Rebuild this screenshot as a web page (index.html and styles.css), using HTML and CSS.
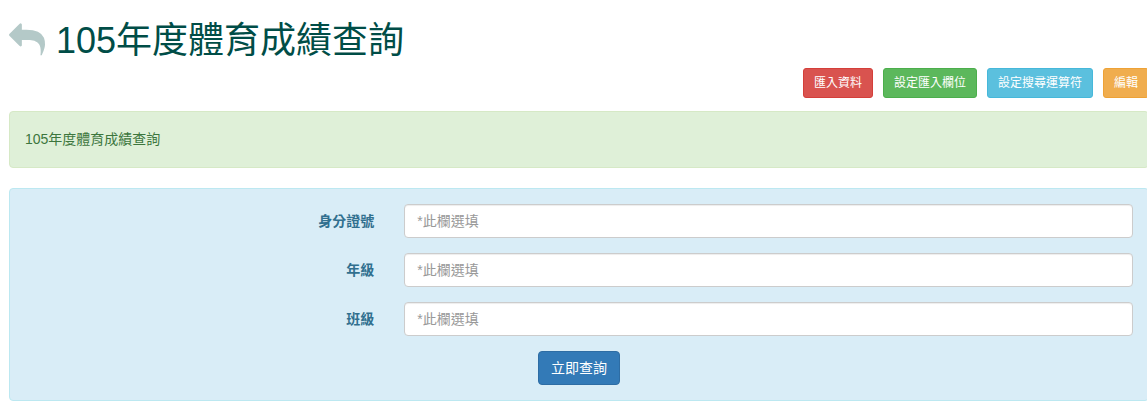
FILE: index.html
```html
<!DOCTYPE html>
<html lang="zh-Hant">
<head>
    <meta charset="UTF-8">
    <meta name="viewport" content="width=device-width, initial-scale=1.0">
    <title>105年度體育成績查詢</title>
    <link rel="stylesheet" href="styles.css">
</head>
<body>
    <div class="page">
        <div class="title-row">
            <a href="#" class="back">
                <svg viewBox="0 0 1792 1792" width="36" height="36" aria-hidden="true">
                    <path d="M1792 1120q0 166-127 451-3 7-10.5 24t-13.5 30-13 22q-12 17-28 17-15 0-23.5-10t-8.5-25q0-9 2.5-26.5t2.5-23.5q5-68 5-123 0-101-17.5-181t-48.5-138.5-80-101-105.5-69.5-133-42.5-154-21.5-175.5-6h-224v256q0 26-19 45t-45 19-45-19l-512-512q-19-19-19-45t19-45l512-512q19-19 45-19t45 19 19 45v256h224q713 0 875 403 53 134 53 333z"/>
                </svg>
            </a>
            <h1>105年度體育成績查詢</h1>
        </div>

        <div class="toolbar">
            <a href="#" class="btn btn-sm btn-danger">匯入資料</a>
            <a href="#" class="btn btn-sm btn-success">設定匯入欄位</a>
            <a href="#" class="btn btn-sm btn-info">設定搜尋運算符</a>
            <a href="#" class="btn btn-sm btn-warning">編輯</a>
        </div>

        <div class="alert-success">105年度體育成績查詢</div>

        <form class="search-form">
            <div class="form-row">
                <label for="idno">身分證號</label>
                <div class="field"><input type="text" id="idno" placeholder="*此欄選填"></div>
            </div>
            <div class="form-row">
                <label for="grade">年級</label>
                <div class="field"><input type="text" id="grade" placeholder="*此欄選填"></div>
            </div>
            <div class="form-row">
                <label for="klass">班級</label>
                <div class="field"><input type="text" id="klass" placeholder="*此欄選填"></div>
            </div>
            <div class="form-actions">
                <button type="button" class="btn btn-primary">立即查詢</button>
            </div>
        </form>
    </div>
</body>
</html>
```

FILE: styles.css
```css
* {
    box-sizing: border-box;
}
html, body {
    overflow: hidden;
}
body {
    margin: 0;
    background-color: #fff;
    color: #333;
    font-family: "Liberation Sans", "Noto Sans CJK TC", sans-serif;
    font-size: 14px;
    line-height: 20px;
}
.page {
    width: 1140px;
    margin-left: 9px;
}

/* heading */
.title-row {
    display: flex;
    align-items: flex-start;
    gap: 11px;
    padding-top: 20px;
    margin-bottom: 7px;
}
.back {
    display: flex;
    width: 36px;
    height: 36px;
    margin-top: 2px;
}
.back svg {
    fill: #b4c9c8;
}
h1 {
    margin: 1px 0 0;
    font-size: 36px;
    font-weight: 400;
    line-height: 40px;
    color: #004d47;
}

/* buttons */
.toolbar {
    display: flex;
    justify-content: flex-end;
    gap: 10px;
    margin-bottom: 13px;
}
.btn {
    display: inline-block;
    padding: 6px 12px;
    border: 1px solid transparent;
    border-radius: 4px;
    color: #fff;
    font-family: inherit;
    font-size: 14px;
    line-height: 20px;
    text-decoration: none;
    cursor: pointer;
}
.btn-sm {
    padding: 5px 10px;
    border-radius: 3px;
    font-size: 12px;
    line-height: 18px;
}
.btn-danger {
    background-color: #d9534f;
    border-color: #d43f3a;
}
.btn-success {
    background-color: #5cb85c;
    border-color: #4cae4c;
}
.btn-info {
    background-color: #5bc0de;
    border-color: #46b8da;
}
.btn-warning {
    background-color: #f0ad4e;
    border-color: #eea236;
}
.btn-primary {
    background-color: #337ab7;
    border-color: #2e6da4;
}

/* message */
.alert-success {
    margin-bottom: 20px;
    padding: 15px;
    border: 1px solid #d6e9c6;
    border-radius: 4px;
    background-color: #dff0d8;
    color: #3c763d;
    line-height: 25px;
}

/* search form */
.search-form {
    padding: 15px 0;
    border: 1px solid #bce8f1;
    border-radius: 4px;
    background-color: #d9edf7;
}
.form-row {
    display: grid;
    grid-template-columns: 1fr 2fr;
    margin-bottom: 15px;
}
.form-row label {
    padding: 7px 15px 0;
    color: #31708f;
    font-weight: 700;
    text-align: right;
}
.field {
    padding: 0 15px;
}
.field input {
    display: block;
    width: 100%;
    height: 34px;
    padding: 6px 12px;
    border: 1px solid #ccc;
    border-radius: 4px;
    background-color: #fff;
    box-shadow: inset 0 1px 1px rgba(0, 0, 0, .075);
    color: #555;
    font-family: inherit;
    font-size: 14px;
}
.field input::placeholder {
    color: #999;
    opacity: 1;
}
.form-actions {
    text-align: center;
}
```
